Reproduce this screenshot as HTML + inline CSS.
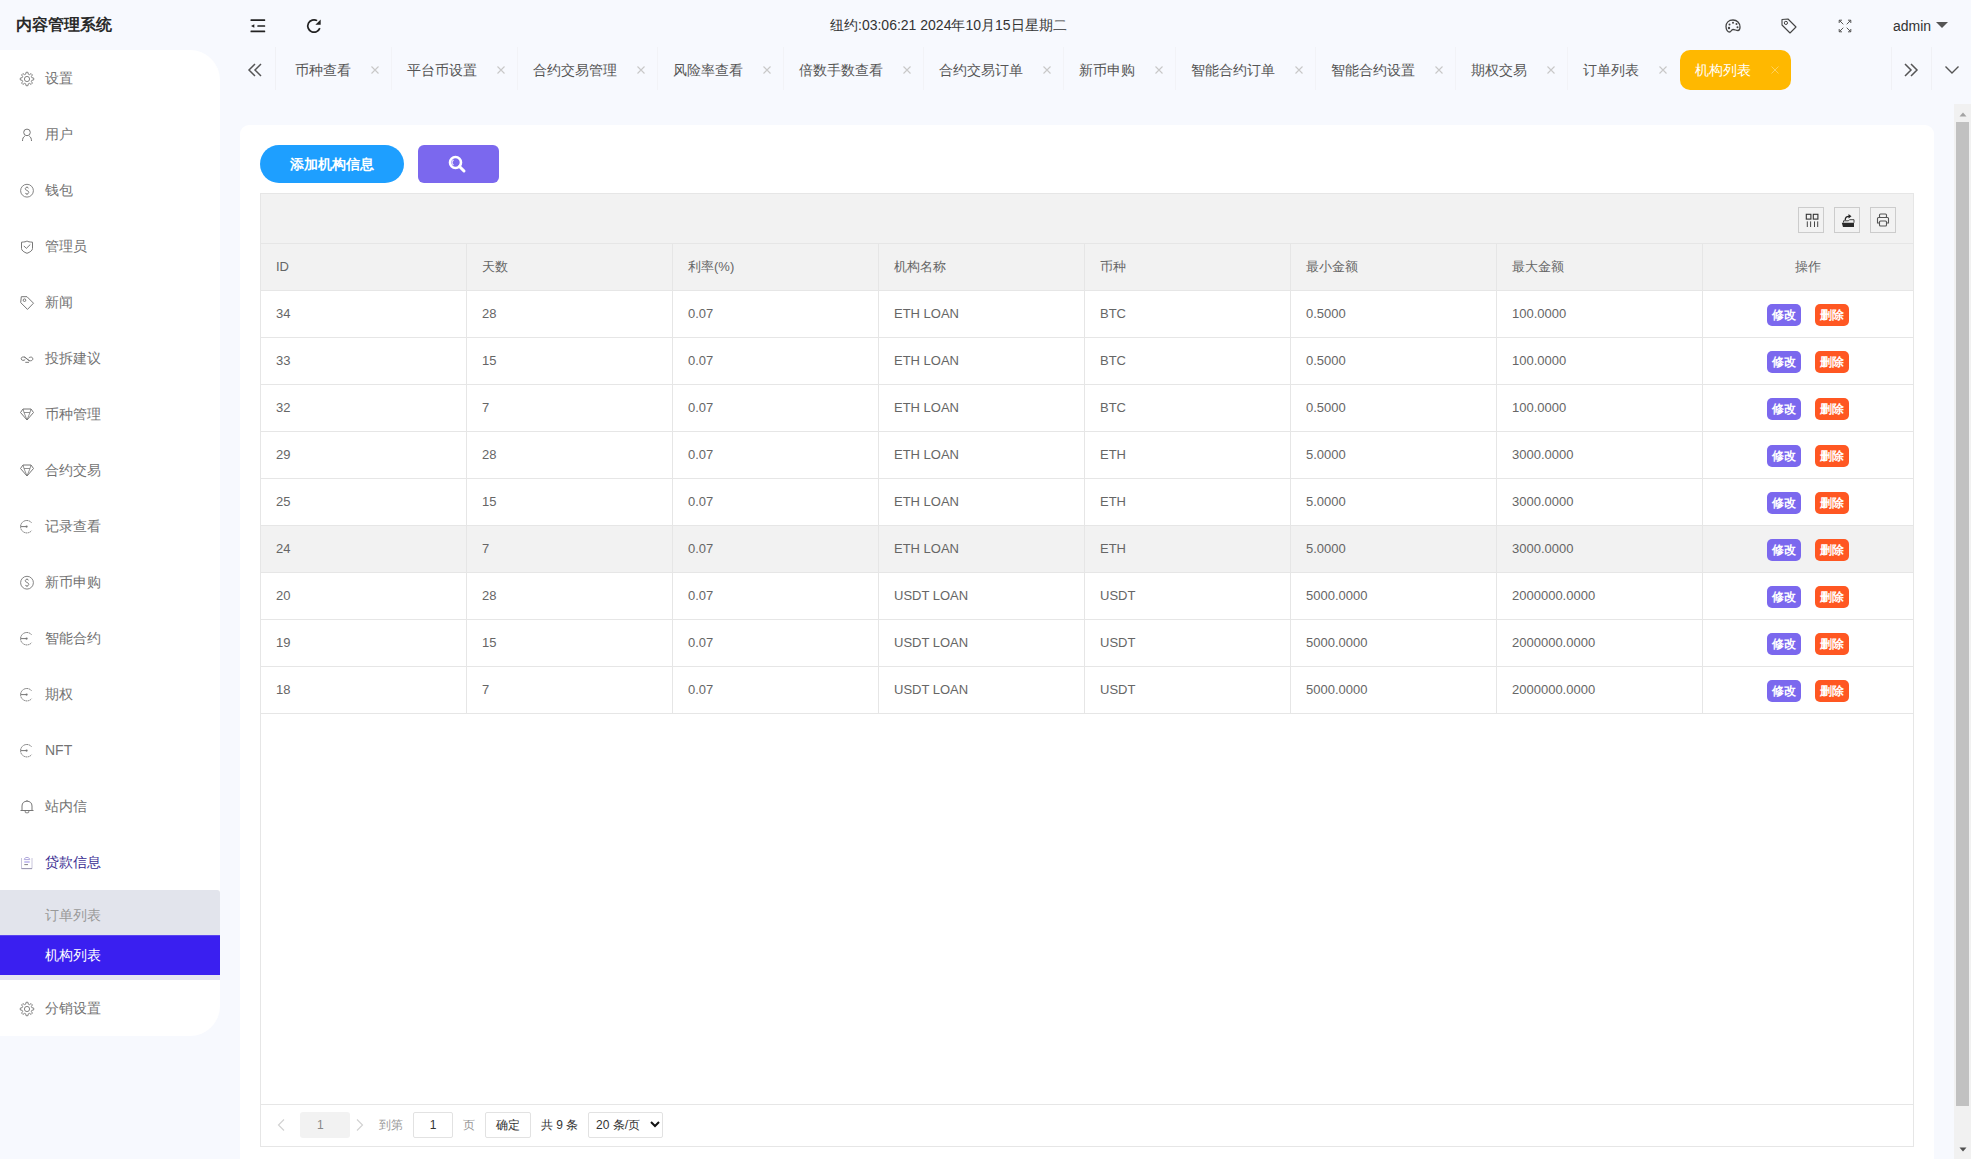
<!DOCTYPE html><html><head><meta charset="utf-8"><title>内容管理系统</title><style>
*{box-sizing:border-box;margin:0;padding:0}
html,body{width:1971px;height:1159px;overflow:hidden}
body{background:#f7f9fe;font-family:"Liberation Sans",sans-serif;font-size:14px;color:#666;position:relative}
.a{position:absolute}
.t{position:absolute;white-space:nowrap;line-height:20px}
svg{position:absolute;overflow:visible}
</style></head><body>
<div class="t" style="left:16px;top:15px;font-size:16px;font-weight:bold;color:#2a2a2a">内容管理系统</div>
<svg style="left:250px;top:19px" width="16" height="14" viewBox="0 0 16 14"><g fill="#222"><rect x="0.5" y="0.3" width="14.7" height="1.6" rx="0.5"/><rect x="7.3" y="6.2" width="7.9" height="1.6" rx="0.5"/><rect x="0.5" y="11.6" width="14.7" height="1.6" rx="0.5"/><path d="M1 7 L4.3 5.2 L4.3 8.8 Z"/></g></svg>
<svg style="left:306px;top:19px" width="16" height="14" viewBox="0 0 16 14"><path d="M13.83 9.12 A6.2 6.2 0 1 1 11.1 1.63" fill="none" stroke="#222" stroke-width="1.7"/><path d="M14.7 0.5 L14.7 5.8 L9.4 5.8 Z" fill="#222"/></svg>
<div class="t" style="left:830px;top:15px;color:#333">纽约:03:06:21 2024年10月15日星期二</div>
<svg style="left:1725px;top:19px" width="16" height="14" viewBox="0 0 16 14"><path d="M8 1 C3.5 1 1 4 1 7.5 C1 11 3 13 4.5 13 C6.5 13 6 10.5 8 10.5 C10 10.5 11 11.5 13 11.5 C14.5 11.5 15 10 15 8 C15 4 12 1 8 1 Z" fill="none" stroke="#444" stroke-width="1.3"/><circle cx="4" cy="9" r="1.2" fill="#444"/><circle cx="4.5" cy="5.5" r="1" fill="#444"/><circle cx="8" cy="3.8" r="1" fill="#444"/><circle cx="11.5" cy="5" r="1" fill="#444"/><circle cx="12.5" cy="8.3" r="1" fill="#444"/></svg>
<svg style="left:1781px;top:18px" width="16" height="16" viewBox="0 0 16 16"><path d="M1 1.5 L1 7 L9 15 L15 9 L7 1 Z" fill="none" stroke="#444" stroke-width="1.1" stroke-linejoin="round"/><circle cx="4.9" cy="4.9" r="1.6" fill="none" stroke="#444" stroke-width="1"/></svg>
<svg style="left:1838px;top:19px" width="14" height="14" viewBox="0 0 14 14"><g fill="none" stroke="#555" stroke-width="1"><path d="M1.2 4 V1.2 H4 M1.2 1.2 L5.3 5.3"/><path d="M10 1.2 H12.8 V4 M12.8 1.2 L8.7 5.3"/><path d="M1.2 10 V12.8 H4 M1.2 12.8 L5.3 8.7"/><path d="M12.8 10 V12.8 H10 M12.8 12.8 L8.7 8.7"/></g></svg>
<div class="t" style="left:1893px;top:16px;color:#333">admin</div>
<svg style="left:1936px;top:22px" width="12" height="6" viewBox="0 0 12 6"><path d="M0 0 H12 L6 6 Z" fill="#555"/></svg>
<div class="a" style="left:0;top:50px;width:220px;height:986px;background:#fff;border-radius:0 30px 30px 0"></div>
<svg style="left:20px;top:72px" width="14" height="14" viewBox="0 0 14 14"><path d="M5.71 2.17 L6.05 0.27 L7.95 0.27 L8.29 2.17 L9.50 2.67 L11.09 1.57 L12.43 2.91 L11.33 4.50 L11.83 5.71 L13.73 6.05 L13.73 7.95 L11.83 8.29 L11.33 9.50 L12.43 11.09 L11.09 12.43 L9.50 11.33 L8.29 11.83 L7.95 13.73 L6.05 13.73 L5.71 11.83 L4.50 11.33 L2.91 12.43 L1.57 11.09 L2.67 9.50 L2.17 8.29 L0.27 7.95 L0.27 6.05 L2.17 5.71 L2.67 4.50 L1.57 2.91 L2.91 1.57 L4.50 2.67 Z" fill="none" stroke="#777" stroke-width="0.9" stroke-linejoin="round"/><circle cx="7" cy="7" r="2.6" fill="none" stroke="#777" stroke-width="0.9"/></svg>
<div class="t" style="left:45px;top:68px;color:#737373">设置</div>
<svg style="left:20px;top:128px" width="14" height="14" viewBox="0 0 14 14"><circle cx="7" cy="4.4" r="3.3" fill="none" stroke="#777" stroke-width="1"/><path d="M2.5 13 C2.5 10.5 3.3 9 4.8 8.2 M9.3 8.2 C10.7 9 11.5 10.5 11.5 13" fill="none" stroke="#777" stroke-width="1"/></svg>
<div class="t" style="left:45px;top:124px;color:#737373">用户</div>
<svg style="left:20px;top:184px" width="14" height="14" viewBox="0 0 14 14"><circle cx="7" cy="6.7" r="6.4" fill="none" stroke="#777" stroke-width="0.9"/><path d="M8.6 4.2 C8.3 3.2 5.2 3 5.2 4.8 C5.2 6.6 8.8 6.2 8.8 8.4 C8.8 10.3 5.5 10.2 5.2 9.1 M7 2.5 V3.4 M7 10.1 V11" fill="none" stroke="#777" stroke-width="0.9"/></svg>
<div class="t" style="left:45px;top:180px;color:#737373">钱包</div>
<svg style="left:20px;top:240px" width="14" height="14" viewBox="0 0 14 14"><path d="M7 0.9 C6 1.9 4.5 1.9 1.5 2.2 L1.5 8.5 C1.5 10.5 4 12.2 7 13.3 C10 12.2 12.5 10.5 12.5 8.5 L12.5 2.2 C9.5 1.9 8 1.9 7 0.9 Z" fill="none" stroke="#777" stroke-width="1" stroke-linejoin="round"/><path d="M3.8 5.9 L6.3 8.4 L10.3 4.5" fill="none" stroke="#777" stroke-width="1"/></svg>
<div class="t" style="left:45px;top:236px;color:#737373">管理员</div>
<svg style="left:20px;top:296px" width="14" height="14" viewBox="0 0 14 14"><path d="M1.3 0.7 L7 0.7 L13.5 7.2 L7.5 13.4 L0.7 6.6 Z" fill="none" stroke="#777" stroke-width="1" stroke-linejoin="round"/><circle cx="4.5" cy="4.2" r="1.3" fill="none" stroke="#777" stroke-width="1"/></svg>
<div class="t" style="left:45px;top:292px;color:#737373">新闻</div>
<svg style="left:20px;top:352px" width="14" height="14" viewBox="0 0 14 14"><path d="M6.8 6.8 C5.5 4.6 1.2 4.2 1.2 6.6 C1.2 8.9 4 8.6 5.2 7.7 M7.2 7.2 C8.5 9.4 12.8 9.3 12.8 7 C12.8 4.6 10 4.8 8.8 5.9 M4.2 4.9 L9.8 8.9" fill="none" stroke="#777" stroke-width="1"/><path d="M5.3 10.3 H9" stroke="#777" stroke-width="1"/></svg>
<div class="t" style="left:45px;top:348px;color:#737373">投拆建议</div>
<svg style="left:20px;top:408px" width="14" height="14" viewBox="0 0 14 14"><path d="M3 1 L11 1 L13.5 4.5 L7 12 L0.5 4.5 Z" fill="none" stroke="#777" stroke-width="1" stroke-linejoin="round"/><path d="M4 4.5 H10 M4 4.5 L7 12 L10 4.5 M4 4.5 L3 1 M10 4.5 L11 1" fill="none" stroke="#777" stroke-width="0.8"/></svg>
<div class="t" style="left:45px;top:404px;color:#737373">币种管理</div>
<svg style="left:20px;top:464px" width="14" height="14" viewBox="0 0 14 14"><path d="M3 1 L11 1 L13.5 4.5 L7 12 L0.5 4.5 Z" fill="none" stroke="#777" stroke-width="1" stroke-linejoin="round"/><path d="M4 4.5 H10 M4 4.5 L7 12 L10 4.5 M4 4.5 L3 1 M10 4.5 L11 1" fill="none" stroke="#777" stroke-width="0.8"/></svg>
<div class="t" style="left:45px;top:460px;color:#737373">合约交易</div>
<svg style="left:20px;top:520px" width="14" height="14" viewBox="0 0 14 14"><path d="M11.6 2.8 A6.2 6.2 0 1 0 11.6 10.6" fill="none" stroke="#777" stroke-width="1" stroke-dasharray="1.6 0.5"/><path d="M0.5 6.6 H6" stroke="#777" stroke-width="1"/><circle cx="6.6" cy="6.6" r="1.1" fill="#777"/></svg>
<div class="t" style="left:45px;top:516px;color:#737373">记录查看</div>
<svg style="left:20px;top:576px" width="14" height="14" viewBox="0 0 14 14"><circle cx="7" cy="6.7" r="6.4" fill="none" stroke="#777" stroke-width="0.9"/><path d="M8.6 4.2 C8.3 3.2 5.2 3 5.2 4.8 C5.2 6.6 8.8 6.2 8.8 8.4 C8.8 10.3 5.5 10.2 5.2 9.1 M7 2.5 V3.4 M7 10.1 V11" fill="none" stroke="#777" stroke-width="0.9"/></svg>
<div class="t" style="left:45px;top:572px;color:#737373">新币申购</div>
<svg style="left:20px;top:632px" width="14" height="14" viewBox="0 0 14 14"><path d="M11.6 2.8 A6.2 6.2 0 1 0 11.6 10.6" fill="none" stroke="#777" stroke-width="1" stroke-dasharray="1.6 0.5"/><path d="M0.5 6.6 H6" stroke="#777" stroke-width="1"/><circle cx="6.6" cy="6.6" r="1.1" fill="#777"/></svg>
<div class="t" style="left:45px;top:628px;color:#737373">智能合约</div>
<svg style="left:20px;top:688px" width="14" height="14" viewBox="0 0 14 14"><path d="M11.6 2.8 A6.2 6.2 0 1 0 11.6 10.6" fill="none" stroke="#777" stroke-width="1" stroke-dasharray="1.6 0.5"/><path d="M0.5 6.6 H6" stroke="#777" stroke-width="1"/><circle cx="6.6" cy="6.6" r="1.1" fill="#777"/></svg>
<div class="t" style="left:45px;top:684px;color:#737373">期权</div>
<svg style="left:20px;top:744px" width="14" height="14" viewBox="0 0 14 14"><path d="M11.6 2.8 A6.2 6.2 0 1 0 11.6 10.6" fill="none" stroke="#777" stroke-width="1" stroke-dasharray="1.6 0.5"/><path d="M0.5 6.6 H6" stroke="#777" stroke-width="1"/><circle cx="6.6" cy="6.6" r="1.1" fill="#777"/></svg>
<div class="t" style="left:45px;top:740px;color:#737373">NFT</div>
<svg style="left:20px;top:800px" width="14" height="14" viewBox="0 0 14 14"><path d="M2 10 L2 6 C2 3 4 1.2 7 1.2 C10 1.2 12 3 12 6 L12 10" fill="none" stroke="#777" stroke-width="1"/><path d="M0.5 10.5 H13.5" stroke="#777" stroke-width="1"/><path d="M5.2 11 V12 Q5.2 12.8 6 12.8 H8 Q8.8 12.8 8.8 12 V11" fill="none" stroke="#777" stroke-width="0.9"/><path d="M6.4 0.7 H7.6" stroke="#777" stroke-width="1"/></svg>
<div class="t" style="left:45px;top:796px;color:#737373">站内信</div>
<svg style="left:20px;top:856px" width="14" height="14" viewBox="0 0 14 14"><path d="M1.5 2 V12.6 H12 V2" fill="none" stroke="#c9c6dc" stroke-width="1"/><path d="M1.5 12.6 H12" stroke="#9a98b0" stroke-width="1"/><path d="M4.3 3.6 C4.3 0.7 9.7 0.7 9.7 3.6 Z" fill="none" stroke="#b0a8dc" stroke-width="1"/><path d="M4.3 6 H9.7" stroke="#a89ee8" stroke-width="1.2"/><path d="M4.3 8.6 H8" stroke="#777" stroke-width="0.9"/></svg>
<div class="t" style="left:45px;top:852px;color:#3a2d92">贷款信息</div>
<div class="a" style="left:0;top:890px;width:220px;height:90px;background:#e2e4ec;border-radius:0 3px 0 0"></div>
<div class="a" style="left:0;top:975px;width:220px;height:5px;background:#e5e4f2"></div>
<div class="a" style="left:0;top:935px;width:220px;height:40px;background:#3a1ff0;border-top:1px solid #5a44f0"></div>
<div class="t" style="left:45px;top:905px;color:#999">订单列表</div>
<div class="t" style="left:45px;top:945px;color:#fff">机构列表</div>
<svg style="left:20px;top:1002px" width="14" height="14" viewBox="0 0 14 14"><path d="M5.71 2.17 L6.05 0.27 L7.95 0.27 L8.29 2.17 L9.50 2.67 L11.09 1.57 L12.43 2.91 L11.33 4.50 L11.83 5.71 L13.73 6.05 L13.73 7.95 L11.83 8.29 L11.33 9.50 L12.43 11.09 L11.09 12.43 L9.50 11.33 L8.29 11.83 L7.95 13.73 L6.05 13.73 L5.71 11.83 L4.50 11.33 L2.91 12.43 L1.57 11.09 L2.67 9.50 L2.17 8.29 L0.27 7.95 L0.27 6.05 L2.17 5.71 L2.67 4.50 L1.57 2.91 L2.91 1.57 L4.50 2.67 Z" fill="none" stroke="#777" stroke-width="0.9" stroke-linejoin="round"/><circle cx="7" cy="7" r="2.6" fill="none" stroke="#777" stroke-width="0.9"/></svg>
<div class="t" style="left:45px;top:998px;color:#737373">分销设置</div>
<svg style="left:248px;top:63px" width="14" height="14" viewBox="0 0 14 14"><path d="M7 1 L1 7 L7 13 M13 1 L7 7 L13 13" fill="none" stroke="#555" stroke-width="1.5"/></svg>
<div class="a" style="left:275px;top:47px;width:1px;height:43px;background:#f0f1f5"></div>
<div class="t" style="left:295px;top:60px;color:#555">币种查看</div>
<svg style="left:371px;top:66px" width="8" height="8" viewBox="0 0 8 8"><path d="M0.5 0.5 L7.5 7.5 M7.5 0.5 L0.5 7.5" stroke="#c8c8c8" stroke-width="1.1"/></svg>
<div class="a" style="left:391px;top:47px;width:1px;height:43px;background:#f2f3f7"></div>
<div class="t" style="left:407px;top:60px;color:#555">平台币设置</div>
<svg style="left:497px;top:66px" width="8" height="8" viewBox="0 0 8 8"><path d="M0.5 0.5 L7.5 7.5 M7.5 0.5 L0.5 7.5" stroke="#c8c8c8" stroke-width="1.1"/></svg>
<div class="a" style="left:517px;top:47px;width:1px;height:43px;background:#f2f3f7"></div>
<div class="t" style="left:533px;top:60px;color:#555">合约交易管理</div>
<svg style="left:637px;top:66px" width="8" height="8" viewBox="0 0 8 8"><path d="M0.5 0.5 L7.5 7.5 M7.5 0.5 L0.5 7.5" stroke="#c8c8c8" stroke-width="1.1"/></svg>
<div class="a" style="left:657px;top:47px;width:1px;height:43px;background:#f2f3f7"></div>
<div class="t" style="left:673px;top:60px;color:#555">风险率查看</div>
<svg style="left:763px;top:66px" width="8" height="8" viewBox="0 0 8 8"><path d="M0.5 0.5 L7.5 7.5 M7.5 0.5 L0.5 7.5" stroke="#c8c8c8" stroke-width="1.1"/></svg>
<div class="a" style="left:783px;top:47px;width:1px;height:43px;background:#f2f3f7"></div>
<div class="t" style="left:799px;top:60px;color:#555">倍数手数查看</div>
<svg style="left:903px;top:66px" width="8" height="8" viewBox="0 0 8 8"><path d="M0.5 0.5 L7.5 7.5 M7.5 0.5 L0.5 7.5" stroke="#c8c8c8" stroke-width="1.1"/></svg>
<div class="a" style="left:923px;top:47px;width:1px;height:43px;background:#f2f3f7"></div>
<div class="t" style="left:939px;top:60px;color:#555">合约交易订单</div>
<svg style="left:1043px;top:66px" width="8" height="8" viewBox="0 0 8 8"><path d="M0.5 0.5 L7.5 7.5 M7.5 0.5 L0.5 7.5" stroke="#c8c8c8" stroke-width="1.1"/></svg>
<div class="a" style="left:1063px;top:47px;width:1px;height:43px;background:#f2f3f7"></div>
<div class="t" style="left:1079px;top:60px;color:#555">新币申购</div>
<svg style="left:1155px;top:66px" width="8" height="8" viewBox="0 0 8 8"><path d="M0.5 0.5 L7.5 7.5 M7.5 0.5 L0.5 7.5" stroke="#c8c8c8" stroke-width="1.1"/></svg>
<div class="a" style="left:1175px;top:47px;width:1px;height:43px;background:#f2f3f7"></div>
<div class="t" style="left:1191px;top:60px;color:#555">智能合约订单</div>
<svg style="left:1295px;top:66px" width="8" height="8" viewBox="0 0 8 8"><path d="M0.5 0.5 L7.5 7.5 M7.5 0.5 L0.5 7.5" stroke="#c8c8c8" stroke-width="1.1"/></svg>
<div class="a" style="left:1315px;top:47px;width:1px;height:43px;background:#f2f3f7"></div>
<div class="t" style="left:1331px;top:60px;color:#555">智能合约设置</div>
<svg style="left:1435px;top:66px" width="8" height="8" viewBox="0 0 8 8"><path d="M0.5 0.5 L7.5 7.5 M7.5 0.5 L0.5 7.5" stroke="#c8c8c8" stroke-width="1.1"/></svg>
<div class="a" style="left:1455px;top:47px;width:1px;height:43px;background:#f2f3f7"></div>
<div class="t" style="left:1471px;top:60px;color:#555">期权交易</div>
<svg style="left:1547px;top:66px" width="8" height="8" viewBox="0 0 8 8"><path d="M0.5 0.5 L7.5 7.5 M7.5 0.5 L0.5 7.5" stroke="#c8c8c8" stroke-width="1.1"/></svg>
<div class="a" style="left:1567px;top:47px;width:1px;height:43px;background:#f2f3f7"></div>
<div class="t" style="left:1583px;top:60px;color:#555">订单列表</div>
<svg style="left:1659px;top:66px" width="8" height="8" viewBox="0 0 8 8"><path d="M0.5 0.5 L7.5 7.5 M7.5 0.5 L0.5 7.5" stroke="#c8c8c8" stroke-width="1.1"/></svg>
<div class="a" style="left:1680px;top:50px;width:111px;height:40px;background:#ffb800;border-radius:10px"></div>
<div class="t" style="left:1695px;top:60px;color:#fff">机构列表</div>
<svg style="left:1771px;top:66px" width="8" height="8" viewBox="0 0 8 8"><path d="M0.5 0.5 L7.5 7.5 M7.5 0.5 L0.5 7.5" stroke="#ffd15c" stroke-width="1"/></svg>
<div class="a" style="left:1891px;top:47px;width:1px;height:43px;background:#f0f1f5"></div>
<div class="a" style="left:1931px;top:47px;width:1px;height:43px;background:#f0f1f5"></div>
<svg style="left:1904px;top:63px" width="14" height="14" viewBox="0 0 14 14"><path d="M1 1 L7 7 L1 13 M7 1 L13 7 L7 13" fill="none" stroke="#555" stroke-width="1.5"/></svg>
<svg style="left:1945px;top:66px" width="14" height="8" viewBox="0 0 14 8"><path d="M0.5 0.5 L7 7 L13.5 0.5" fill="none" stroke="#555" stroke-width="1.4"/></svg>
<div class="a" style="left:240px;top:125px;width:1694px;height:1100px;background:#fff;border-radius:9px"></div>
<div class="a" style="left:260px;top:145px;width:144px;height:38px;background:#1e9fff;border-radius:19px;color:#fff;font-weight:bold;text-align:center;line-height:38px">添加机构信息</div>
<div class="a" style="left:418px;top:145px;width:81px;height:38px;background:#7b68ee;border-radius:6px"></div>
<svg style="left:448px;top:155px" width="18" height="18" viewBox="0 0 18 18"><circle cx="7.5" cy="7.5" r="5.5" fill="none" stroke="#fff" stroke-width="2.6"/><path d="M11.5 11.5 L16 16" stroke="#fff" stroke-width="3" stroke-linecap="round"/><path d="M5.6 4.9 A3 3 0 0 0 5.6 10.1" fill="none" stroke="#e8e4ff" stroke-width="1.1"/></svg>
<div class="a" style="left:260px;top:193px;width:1654px;height:954px;border:1px solid #e6e6e6;background:#fff"></div>
<div class="a" style="left:261px;top:194px;width:1652px;height:96px;background:#f2f2f2"></div>
<div class="a" style="left:261px;top:243px;width:1652px;height:1px;background:#e6e6e6"></div>
<div class="a" style="left:1798px;top:207px;width:26px;height:26px;border:1px solid #ccc"></div>
<div class="a" style="left:1834px;top:207px;width:26px;height:26px;border:1px solid #ccc"></div>
<div class="a" style="left:1870px;top:207px;width:26px;height:26px;border:1px solid #ccc"></div>
<svg style="left:1804px;top:213px" width="16" height="16" viewBox="0 0 16 16"><g fill="none" stroke="#333" stroke-width="1.1"><rect x="2.3" y="1.3" width="4.6" height="4.8"/><rect x="9.3" y="1.3" width="4.6" height="4.8"/></g><g stroke="#333" stroke-width="0.9"><path d="M3.3 8.4 V14 M6.6 8.4 V14 M10.5 8.4 V14 M13.7 8.4 V14"/></g></svg>
<svg style="left:1840px;top:213px" width="16" height="16" viewBox="0 0 16 16"><path d="M1.8 9.7 H14 V14 H3 Z" fill="#2a2a2a"/><path d="M3.5 9.5 V7.8 H8.5 L9.5 6.7 H14 V9.7" fill="none" stroke="#333" stroke-width="0.9"/><path d="M5.2 7.2 C5.2 4.5 6.5 3.3 9 3.3" fill="none" stroke="#222" stroke-width="1.3"/><path d="M8.5 1 L11.5 3.3 L8.5 5.6 Z" fill="#222"/></svg>
<svg style="left:1876px;top:213px" width="14" height="14" viewBox="0 0 14 14"><g fill="none" stroke="#555" stroke-width="1.1"><rect x="3.5" y="1" width="7" height="3.5" rx="1"/><path d="M3 10 H1.5 V5.5 Q1.5 4.5 2.5 4.5 H11.5 Q12.5 4.5 12.5 5.5 V10 H11"/><rect x="3.5" y="8" width="7" height="5" rx="1"/></g></svg>
<div class="t" style="left:276px;top:257px;font-size:13px">ID</div>
<div class="t" style="left:482px;top:257px;font-size:13px">天数</div>
<div class="t" style="left:688px;top:257px;font-size:13px">利率(%)</div>
<div class="t" style="left:894px;top:257px;font-size:13px">机构名称</div>
<div class="t" style="left:1100px;top:257px;font-size:13px">币种</div>
<div class="t" style="left:1306px;top:257px;font-size:13px">最小金额</div>
<div class="t" style="left:1512px;top:257px;font-size:13px">最大金额</div>
<div class="t" style="left:1795px;top:257px;font-size:13px">操作</div>
<div class="a" style="left:261px;top:290px;width:1652px;height:1px;background:#e6e6e6"></div>
<div class="t" style="left:276px;top:304px;font-size:13px">34</div>
<div class="t" style="left:482px;top:304px;font-size:13px">28</div>
<div class="t" style="left:688px;top:304px;font-size:13px">0.07</div>
<div class="t" style="left:894px;top:304px;font-size:13px">ETH LOAN</div>
<div class="t" style="left:1100px;top:304px;font-size:13px">BTC</div>
<div class="t" style="left:1306px;top:304px;font-size:13px">0.5000</div>
<div class="t" style="left:1512px;top:304px;font-size:13px">100.0000</div>
<div class="a" style="left:1767px;top:304px;width:34px;height:22px;background:#7b68ee;border-radius:5px;color:#fff;font-size:12px;font-weight:bold;line-height:22px;text-align:center">修改</div>
<div class="a" style="left:1815px;top:304px;width:34px;height:22px;background:#ff5722;border-radius:5px;color:#fff;font-size:12px;font-weight:bold;line-height:22px;text-align:center">删除</div>
<div class="a" style="left:261px;top:337px;width:1652px;height:1px;background:#e6e6e6"></div>
<div class="t" style="left:276px;top:351px;font-size:13px">33</div>
<div class="t" style="left:482px;top:351px;font-size:13px">15</div>
<div class="t" style="left:688px;top:351px;font-size:13px">0.07</div>
<div class="t" style="left:894px;top:351px;font-size:13px">ETH LOAN</div>
<div class="t" style="left:1100px;top:351px;font-size:13px">BTC</div>
<div class="t" style="left:1306px;top:351px;font-size:13px">0.5000</div>
<div class="t" style="left:1512px;top:351px;font-size:13px">100.0000</div>
<div class="a" style="left:1767px;top:351px;width:34px;height:22px;background:#7b68ee;border-radius:5px;color:#fff;font-size:12px;font-weight:bold;line-height:22px;text-align:center">修改</div>
<div class="a" style="left:1815px;top:351px;width:34px;height:22px;background:#ff5722;border-radius:5px;color:#fff;font-size:12px;font-weight:bold;line-height:22px;text-align:center">删除</div>
<div class="a" style="left:261px;top:384px;width:1652px;height:1px;background:#e6e6e6"></div>
<div class="t" style="left:276px;top:398px;font-size:13px">32</div>
<div class="t" style="left:482px;top:398px;font-size:13px">7</div>
<div class="t" style="left:688px;top:398px;font-size:13px">0.07</div>
<div class="t" style="left:894px;top:398px;font-size:13px">ETH LOAN</div>
<div class="t" style="left:1100px;top:398px;font-size:13px">BTC</div>
<div class="t" style="left:1306px;top:398px;font-size:13px">0.5000</div>
<div class="t" style="left:1512px;top:398px;font-size:13px">100.0000</div>
<div class="a" style="left:1767px;top:398px;width:34px;height:22px;background:#7b68ee;border-radius:5px;color:#fff;font-size:12px;font-weight:bold;line-height:22px;text-align:center">修改</div>
<div class="a" style="left:1815px;top:398px;width:34px;height:22px;background:#ff5722;border-radius:5px;color:#fff;font-size:12px;font-weight:bold;line-height:22px;text-align:center">删除</div>
<div class="a" style="left:261px;top:431px;width:1652px;height:1px;background:#e6e6e6"></div>
<div class="t" style="left:276px;top:445px;font-size:13px">29</div>
<div class="t" style="left:482px;top:445px;font-size:13px">28</div>
<div class="t" style="left:688px;top:445px;font-size:13px">0.07</div>
<div class="t" style="left:894px;top:445px;font-size:13px">ETH LOAN</div>
<div class="t" style="left:1100px;top:445px;font-size:13px">ETH</div>
<div class="t" style="left:1306px;top:445px;font-size:13px">5.0000</div>
<div class="t" style="left:1512px;top:445px;font-size:13px">3000.0000</div>
<div class="a" style="left:1767px;top:445px;width:34px;height:22px;background:#7b68ee;border-radius:5px;color:#fff;font-size:12px;font-weight:bold;line-height:22px;text-align:center">修改</div>
<div class="a" style="left:1815px;top:445px;width:34px;height:22px;background:#ff5722;border-radius:5px;color:#fff;font-size:12px;font-weight:bold;line-height:22px;text-align:center">删除</div>
<div class="a" style="left:261px;top:478px;width:1652px;height:1px;background:#e6e6e6"></div>
<div class="t" style="left:276px;top:492px;font-size:13px">25</div>
<div class="t" style="left:482px;top:492px;font-size:13px">15</div>
<div class="t" style="left:688px;top:492px;font-size:13px">0.07</div>
<div class="t" style="left:894px;top:492px;font-size:13px">ETH LOAN</div>
<div class="t" style="left:1100px;top:492px;font-size:13px">ETH</div>
<div class="t" style="left:1306px;top:492px;font-size:13px">5.0000</div>
<div class="t" style="left:1512px;top:492px;font-size:13px">3000.0000</div>
<div class="a" style="left:1767px;top:492px;width:34px;height:22px;background:#7b68ee;border-radius:5px;color:#fff;font-size:12px;font-weight:bold;line-height:22px;text-align:center">修改</div>
<div class="a" style="left:1815px;top:492px;width:34px;height:22px;background:#ff5722;border-radius:5px;color:#fff;font-size:12px;font-weight:bold;line-height:22px;text-align:center">删除</div>
<div class="a" style="left:261px;top:526px;width:1652px;height:46px;background:#f2f2f2"></div>
<div class="a" style="left:261px;top:525px;width:1652px;height:1px;background:#e6e6e6"></div>
<div class="t" style="left:276px;top:539px;font-size:13px">24</div>
<div class="t" style="left:482px;top:539px;font-size:13px">7</div>
<div class="t" style="left:688px;top:539px;font-size:13px">0.07</div>
<div class="t" style="left:894px;top:539px;font-size:13px">ETH LOAN</div>
<div class="t" style="left:1100px;top:539px;font-size:13px">ETH</div>
<div class="t" style="left:1306px;top:539px;font-size:13px">5.0000</div>
<div class="t" style="left:1512px;top:539px;font-size:13px">3000.0000</div>
<div class="a" style="left:1767px;top:539px;width:34px;height:22px;background:#7b68ee;border-radius:5px;color:#fff;font-size:12px;font-weight:bold;line-height:22px;text-align:center">修改</div>
<div class="a" style="left:1815px;top:539px;width:34px;height:22px;background:#ff5722;border-radius:5px;color:#fff;font-size:12px;font-weight:bold;line-height:22px;text-align:center">删除</div>
<div class="a" style="left:261px;top:572px;width:1652px;height:1px;background:#e6e6e6"></div>
<div class="t" style="left:276px;top:586px;font-size:13px">20</div>
<div class="t" style="left:482px;top:586px;font-size:13px">28</div>
<div class="t" style="left:688px;top:586px;font-size:13px">0.07</div>
<div class="t" style="left:894px;top:586px;font-size:13px">USDT LOAN</div>
<div class="t" style="left:1100px;top:586px;font-size:13px">USDT</div>
<div class="t" style="left:1306px;top:586px;font-size:13px">5000.0000</div>
<div class="t" style="left:1512px;top:586px;font-size:13px">2000000.0000</div>
<div class="a" style="left:1767px;top:586px;width:34px;height:22px;background:#7b68ee;border-radius:5px;color:#fff;font-size:12px;font-weight:bold;line-height:22px;text-align:center">修改</div>
<div class="a" style="left:1815px;top:586px;width:34px;height:22px;background:#ff5722;border-radius:5px;color:#fff;font-size:12px;font-weight:bold;line-height:22px;text-align:center">删除</div>
<div class="a" style="left:261px;top:619px;width:1652px;height:1px;background:#e6e6e6"></div>
<div class="t" style="left:276px;top:633px;font-size:13px">19</div>
<div class="t" style="left:482px;top:633px;font-size:13px">15</div>
<div class="t" style="left:688px;top:633px;font-size:13px">0.07</div>
<div class="t" style="left:894px;top:633px;font-size:13px">USDT LOAN</div>
<div class="t" style="left:1100px;top:633px;font-size:13px">USDT</div>
<div class="t" style="left:1306px;top:633px;font-size:13px">5000.0000</div>
<div class="t" style="left:1512px;top:633px;font-size:13px">2000000.0000</div>
<div class="a" style="left:1767px;top:633px;width:34px;height:22px;background:#7b68ee;border-radius:5px;color:#fff;font-size:12px;font-weight:bold;line-height:22px;text-align:center">修改</div>
<div class="a" style="left:1815px;top:633px;width:34px;height:22px;background:#ff5722;border-radius:5px;color:#fff;font-size:12px;font-weight:bold;line-height:22px;text-align:center">删除</div>
<div class="a" style="left:261px;top:666px;width:1652px;height:1px;background:#e6e6e6"></div>
<div class="t" style="left:276px;top:680px;font-size:13px">18</div>
<div class="t" style="left:482px;top:680px;font-size:13px">7</div>
<div class="t" style="left:688px;top:680px;font-size:13px">0.07</div>
<div class="t" style="left:894px;top:680px;font-size:13px">USDT LOAN</div>
<div class="t" style="left:1100px;top:680px;font-size:13px">USDT</div>
<div class="t" style="left:1306px;top:680px;font-size:13px">5000.0000</div>
<div class="t" style="left:1512px;top:680px;font-size:13px">2000000.0000</div>
<div class="a" style="left:1767px;top:680px;width:34px;height:22px;background:#7b68ee;border-radius:5px;color:#fff;font-size:12px;font-weight:bold;line-height:22px;text-align:center">修改</div>
<div class="a" style="left:1815px;top:680px;width:34px;height:22px;background:#ff5722;border-radius:5px;color:#fff;font-size:12px;font-weight:bold;line-height:22px;text-align:center">删除</div>
<div class="a" style="left:261px;top:713px;width:1652px;height:1px;background:#e6e6e6"></div>
<div class="a" style="left:466px;top:243px;width:1px;height:470px;background:#e6e6e6"></div>
<div class="a" style="left:672px;top:243px;width:1px;height:470px;background:#e6e6e6"></div>
<div class="a" style="left:878px;top:243px;width:1px;height:470px;background:#e6e6e6"></div>
<div class="a" style="left:1084px;top:243px;width:1px;height:470px;background:#e6e6e6"></div>
<div class="a" style="left:1290px;top:243px;width:1px;height:470px;background:#e6e6e6"></div>
<div class="a" style="left:1496px;top:243px;width:1px;height:470px;background:#e6e6e6"></div>
<div class="a" style="left:1702px;top:243px;width:1px;height:470px;background:#e6e6e6"></div>
<div class="a" style="left:261px;top:1104px;width:1652px;height:1px;background:#e6e6e6"></div>
<svg style="left:277px;top:1119px" width="8" height="12" viewBox="0 0 8 12"><path d="M7 0.5 L1.5 6 L7 11.5" fill="none" stroke="#d2d2d2" stroke-width="1.2"/></svg>
<div class="a" style="left:300px;top:1112px;width:50px;height:26px;background:#f2f2f2;border-radius:3px;color:#888;font-size:12px;line-height:26px;text-align:left;padding-left:17px">1</div>
<svg style="left:356px;top:1119px" width="8" height="12" viewBox="0 0 8 12"><path d="M1 0.5 L6.5 6 L1 11.5" fill="none" stroke="#d2d2d2" stroke-width="1.2"/></svg>
<div class="t" style="left:379px;top:1115px;font-size:12px;color:#999">到第</div>
<div class="a" style="left:413px;top:1112px;width:40px;height:26px;border:1px solid #e2e2e2;border-radius:2px;color:#333;font-size:12px;line-height:24px;text-align:center">1</div>
<div class="t" style="left:463px;top:1115px;font-size:12px;color:#999">页</div>
<div class="a" style="left:485px;top:1112px;width:46px;height:26px;border:1px solid #e2e2e2;border-radius:2px;color:#333;font-size:12px;line-height:24px;text-align:center">确定</div>
<div class="t" style="left:541px;top:1115px;font-size:12px;color:#333">共 9 条</div>
<div class="a" style="left:588px;top:1112px;width:75px;height:26px;border:1px solid #e2e2e2;border-radius:2px;color:#333;font-size:12px;line-height:24px;padding-left:7px">20 条/页</div>
<svg style="left:650px;top:1121px" width="10" height="7" viewBox="0 0 10 7"><path d="M1 1 L5 5 L9 1" fill="none" stroke="#111" stroke-width="2"/></svg>
<div class="a" style="left:1954px;top:104px;width:17px;height:1055px;background:#f1f1f1"></div>
<div class="a" style="left:1956px;top:122px;width:13px;height:984px;background:#c1c1c1"></div>
<svg style="left:1959px;top:112px" width="8" height="5" viewBox="0 0 8 5"><path d="M0.5 4.5 L4 0.5 L7.5 4.5 Z" fill="#a3a3a3"/></svg>
<svg style="left:1959px;top:1147px" width="8" height="5" viewBox="0 0 8 5"><path d="M0.5 0.5 L4 4.5 L7.5 0.5 Z" fill="#505050"/></svg>
</body></html>
